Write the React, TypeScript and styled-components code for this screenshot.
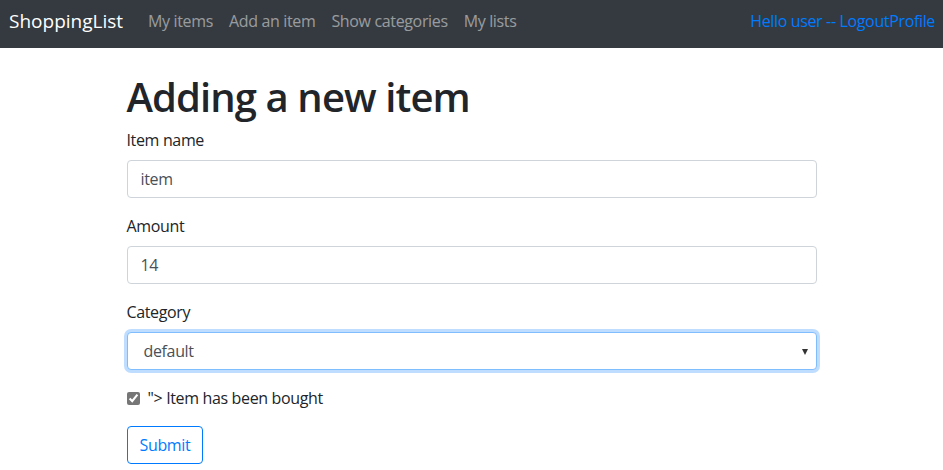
import React from "react";
import styled, { createGlobalStyle } from "styled-components";

const Global = createGlobalStyle`
  *, *::before, *::after { box-sizing: border-box; }
  body {
    margin: 0;
    font-family: "Open Sans", "Noto Sans", sans-serif;
    font-size: 16px;
    line-height: 1.5;
    letter-spacing: -0.35px;
    color: #212529;
    background: #fff;
  }
`;

const Navbar = styled.nav`
  height: 48px;
  background: #343a40;
  display: flex;
  align-items: center;
  padding: 0 8px 6px 9px;
`;

const Brand = styled.a`
  color: #fff;
  font-size: 19px;
  letter-spacing: 0;
  margin-right: 25px;
  text-decoration: none;
  white-space: nowrap;
`;

const NavList = styled.div`
  display: flex;
  gap: 16px;
  flex: 1;
`;

const NavLink = styled.a`
  color: rgba(255, 255, 255, 0.5);
  font-size: 16px;
  text-decoration: none;
  white-space: nowrap;
`;

const UserText = styled.span`
  color: #007bff;
  font-size: 16px;
  white-space: nowrap;
`;

const Container = styled.main`
  width: 690px;
  margin: 0 auto;
  padding-top: 25px;
`;

const Title = styled.h1`
  font-size: 40px;
  font-weight: 600;
  letter-spacing: -0.9px;
  line-height: 1.2;
  margin: 0 0 7px;
`;

const Group = styled.div`
  margin-bottom: 16px;
`;

const Label = styled.label`
  display: block;
  margin-bottom: 8px;
  line-height: 24px;
`;

const Input = styled.input`
  display: block;
  width: 100%;
  height: 38px;
  padding: 6px 13px;
  font: inherit;
  letter-spacing: inherit;
  color: #495057;
  border: 1px solid #ced4da;
  border-radius: 4px;
  outline: none;
`;

const SelectWrap = styled.div`
  position: relative;
`;

const Select = styled.select`
  display: block;
  width: 100%;
  height: 38px;
  padding: 6px 12px 6px 16px;
  font: inherit;
  letter-spacing: inherit;
  color: #495057;
  background: #fff;
  border: 1px solid #80bdff;
  border-radius: 4px;
  box-shadow: 0 0 0 3px rgba(0, 123, 255, 0.25);
  appearance: none;
  outline: none;
`;

const Caret = styled.span`
  position: absolute;
  right: 9px;
  top: 17px;
  width: 0;
  height: 0;
  border-left: 3.5px solid transparent;
  border-right: 3.5px solid transparent;
  border-top: 6px solid #333;
  pointer-events: none;
`;

const Check = styled.div`
  display: flex;
  align-items: center;
  gap: 8px;
  margin-bottom: 16px;
  line-height: 24px;
`;

const CheckBox = styled.input`
  width: 13px;
  height: 13px;
  margin: 0;
  accent-color: #767676;
`;

const Button = styled.button`
  font: inherit;
  letter-spacing: inherit;
  color: #007bff;
  background: transparent;
  border: 1px solid #007bff;
  border-radius: 4px;
  height: 38px;
  padding: 0 12px;
`;

export default function App() {
  return (
    <>
      <Global />
      <Navbar>
        <Brand href="#">ShoppingList</Brand>
        <NavList>
          <NavLink href="#">My items</NavLink>
          <NavLink href="#">Add an item</NavLink>
          <NavLink href="#">Show categories</NavLink>
          <NavLink href="#">My lists</NavLink>
        </NavList>
        <UserText>Hello user -- LogoutProfile</UserText>
      </Navbar>
      <Container>
        <Title>Adding a new item</Title>
        <Group>
          <Label>Item name</Label>
          <Input defaultValue="item" />
        </Group>
        <Group>
          <Label>Amount</Label>
          <Input defaultValue="14" />
        </Group>
        <Group>
          <Label>Category</Label>
          <SelectWrap>
            <Select defaultValue="default">
              <option value="default">default</option>
            </Select>
            <Caret />
          </SelectWrap>
        </Group>
        <Check>
          <CheckBox type="checkbox" defaultChecked />
          <span>"&gt; Item has been bought</span>
        </Check>
        <Button>Submit</Button>
      </Container>
    </>
  );
}
